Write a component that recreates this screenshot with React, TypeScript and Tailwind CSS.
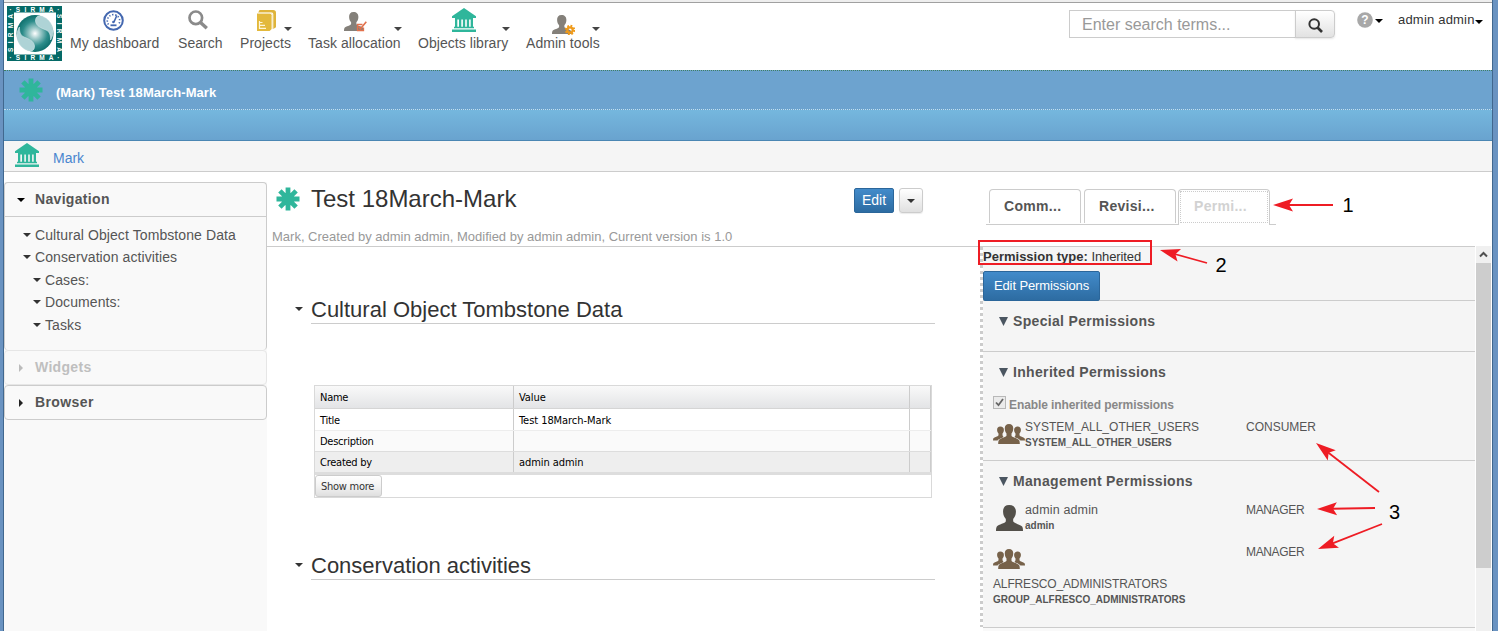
import React from "react";

type IconProps = { className?: string };

function Caret({ className = "", color = "#222" }: { className?: string; color?: string }) {
  return (
    <svg className={"shrink-0 " + className} width="8" height="4" viewBox="0 0 8 4">
      <path d="M0 0h8L4 4z" fill={color} />
    </svg>
  );
}

function CaretRight({ className = "", color = "#222" }: { className?: string; color?: string }) {
  return (
    <svg className={"shrink-0 " + className} width="4" height="8" viewBox="0 0 4 8">
      <path d="M0 0v8L4 4z" fill={color} />
    </svg>
  );
}

function Logo() {
  const style = {
    fontFamily: '"Liberation Sans", sans-serif',
    fontSize: "6.5px",
    fontWeight: 700,
    fill: "#fff",
  } as const;
  const swirl = "M31 10C39 9.500 46 17 46 25c0 4-1 7-2.500 9C43.500 29 43 26 39 24 34 22 29 20 28.500 15c-.1-2 .6-4 2.500-5z";
  return (
    <svg className="ml-[3px] mt-[3px] shrink-0" width="55" height="55" viewBox="0 0 55 55">
      <defs>
        <radialGradient id="globe" cx="0.5" cy="0.5" r="0.52">
          <stop offset="0" stopColor="#ffffff" />
          <stop offset="0.25" stopColor="#a9d0d0" />
          <stop offset="0.65" stopColor="#2c8c8a" />
          <stop offset="1" stopColor="#0a6b69" />
        </radialGradient>
      </defs>
      <rect width="55" height="55" fill="#056a67" />
      <rect x="7" y="6.5" width="42" height="42" fill="#fff" />
      <circle cx="28" cy="27.5" r="18.5" fill="url(#globe)" />
      <path d={swirl} fill="#aed3d6" stroke="#d3e8e9" strokeWidth="0.6" />
      <path d={swirl} transform="rotate(180 28 27.500)" fill="#aed3d6" stroke="#d3e8e9" strokeWidth="0.6" />
      <text x="2.500" y="5.600" textLength="50" style={style}>· S I R M A ·</text>
      <text x="2.500" y="54" textLength="50" style={style}>· S I R M A ·</text>
      <text x="-46" y="5.800" textLength="38" transform="rotate(-90)" style={style}>S I R M A</text>
      <text x="8" y="-49.800" textLength="38" transform="rotate(90)" style={style}>S I R M A</text>
    </svg>
  );
}

function DashboardIcon({ className = "" }: IconProps) {
  return (
    <svg className={"shrink-0 " + className} width="21" height="21" viewBox="0 0 21 21" fill="none" stroke="#4468b0">
      <circle cx="10.5" cy="10.5" r="9.3" strokeWidth="2" />
      <path d="M5.500 14.500A6.200 6.200 0 1 1 15.500 14.500" strokeWidth="1.600" strokeDasharray="1.300 1.700" />
      <path d="M13.8 5.5 11 12" strokeWidth="1.6" />
      <path d="M7.500 15.300h6" strokeWidth="1.800" />
      <circle cx="10.4" cy="12" r="1.3" fill="#4468b0" stroke="none" />
    </svg>
  );
}

function SearchIcon({ className = "" }: IconProps) {
  return (
    <svg className={"shrink-0 " + className} width="20" height="20" viewBox="0 0 20 20" fill="none" stroke="#8a8a8a">
      <circle cx="7.8" cy="7.8" r="6.3" strokeWidth="2.7" />
      <path d="m12.5 12.5 6.3 5.8" strokeWidth="3.4" />
    </svg>
  );
}

function ProjectsIcon({ className = "" }: IconProps) {
  return (
    <svg className={"shrink-0 " + className} width="19" height="21" viewBox="0 0 19 21">
      <path d="M2.5 0h13.7Q19 0 19 2.8v14.4L16.3 19V4Q16 2.6 14.5 2.6H1.2z" fill="#dfb43a" />
      <path d="M0 3.4h12.7q1.9 0 1.9 1.9V19l-2 2H0z" fill="#e3b93c" />
      <path d="M1 3h12.500q2 0 2 2v14" fill="none" stroke="#f7eac0" strokeWidth="0.8" />
      <path d="M2.500 11v8M2 12.500h3.500M2 15.300h6M2 18.300h7" stroke="#fff6d8" strokeWidth="1.200" />
    </svg>
  );
}

function PersonShape({ fill }: { fill: string }) {
  return (
    <path
      d="M9.5 0C6.4 0 5 2 5.1 5c.1 2.6.9 4 2 5.300v1.600C6.800 13.400 1.800 14.200.6 15.800.1 16.600 0 18 0 19h19.500c0-1-.1-2.400-.6-3.200-1.200-1.600-6.200-2.400-6.500-3.900v-1.600c1.100-1.300 1.900-2.700 2-5.300C14.500 2 12.600 0 9.500 0z"
      fill={fill}
    />
  );
}

function TaskIcon({ className = "" }: IconProps) {
  return (
    <svg className={"shrink-0 " + className} width="23" height="20" viewBox="0 0 23 20">
      <PersonShape fill="#84807a" />
      <path d="M18.500 12.500h-5v6h6v-3" fill="none" stroke="#e2714c" strokeWidth="1.300" />
      <path d="m14.500 14.500 2 2.200 5.800-7" fill="none" stroke="#e2714c" strokeWidth="1.600" />
    </svg>
  );
}

function AdminIcon({ className = "" }: IconProps) {
  return (
    <svg className={"shrink-0 " + className} width="23" height="20" viewBox="0 0 23 20">
      <PersonShape fill="#84807a" />
      <circle cx="18" cy="15" r="4.200" fill="none" stroke="#ef9a1a" strokeWidth="2" strokeDasharray="1.800 1.499" />
      <circle cx="18" cy="15" r="2.700" fill="none" stroke="#ef9a1a" strokeWidth="2.200" />
    </svg>
  );
}

function MuseumIcon({ className = "" }: IconProps) {
  return (
    <svg className={"shrink-0 " + className} width="24" height="24" viewBox="0 0 24 24" fill="#2fb69b">
      <path d="M12 0 24 8.300V10H0V8.300z" />
      <path d="M3 10h18v1.500H3z" />
      <path d="M3 11h2.300v8H3zM7 11h2.300v8H7zM10.900 11h2.300v8h-2.300zM14.800 11h2.300v8h-2.300zM18.700 11H21v8h-2.300z" />
      <path d="M2 18.700h20v1.500H2zM0 21.500h24V24H0z" />
    </svg>
  );
}

function Asterisk({ className = "" }: IconProps) {
  return (
    <svg className={"shrink-0 " + className} width="24" height="24" viewBox="0 0 24 24">
      <path d="M12 .5v23M.5 12h23M3.900 3.900l16.200 16.200M20.100 3.900 3.900 20.100" stroke="#2fb69b" strokeWidth="4.800" />
      <circle cx="12" cy="12" r="6.600" fill="#2fb69b" />
    </svg>
  );
}

function GroupIcon({ className = "" }: IconProps) {
  return (
    <svg className={"shrink-0 " + className} width="32" height="20" viewBox="0 0 32 20" fill="#77624a">
      <path d="M7.300 2.600C5.200 2.600 4 4 4.100 6c.1 1.700.6 2.700 1.400 3.500v1.700C5 12.600.8 13.100.2 14.600L0 16.500h4.500c1-1.300 3-2 5.300-3l.6-.7-.9-1.600V9.500c.8-.8 1.300-1.800 1.400-3.500.1-2-1.300-3.400-3.600-3.400z" />
      <path d="M24.700 2.600c2.100 0 3.300 1.400 3.200 3.400-.1 1.700-.6 2.700-1.400 3.500v1.700c.5 1.400 4.700 1.900 5.300 3.400l.2 1.900h-4.500c-1-1.300-3-2-5.300-3l-.6-.7.9-1.600V9.500c-.8-.8-1.300-1.800-1.400-3.500-.1-2 1.300-3.400 3.600-3.400z" />
      <path d="M16 0c-3 0-4.400 1.900-4.200 4.700.1 2.200.7 3.600 1.700 4.800v2.300c-.5 1.600-6.600 2.500-7.700 4.400-.5.900-.6 2.600-.6 3.800h21.600c0-1.200-.1-2.900-.6-3.800-1.100-1.900-7.200-2.800-7.700-4.400V9.500c1-1.200 1.600-2.600 1.700-4.800C20.400 1.900 19 0 16 0z" />
    </svg>
  );
}

function NavItem(props: {
  label: string;
  box: string;
  icon: React.ReactNode;
  caret?: boolean;
}) {
  return (
    <div className={"flex shrink-0 flex-col " + props.box}>
      <div className="flex h-[32px] items-start">
        {props.icon}
        {props.caret && <Caret className="-mr-px ml-auto mt-[24px]" color="#444" />}
      </div>
      <div className="whitespace-nowrap text-[14px] leading-[17px] tracking-[0.050px] text-[#555]">{props.label}</div>
    </div>
  );
}

function Header() {
  return (
    <header className="flex h-[67px] shrink-0 items-start bg-white">
      <Logo />
      <div className="ml-[8px] flex">
        <NavItem label="My dashboard" box="w-[108px]" icon={<DashboardIcon className="ml-[33px] mt-[7px]" />} />
        <NavItem label="Search" box="w-[62px]" icon={<SearchIcon className="ml-[10px] mt-[7px]" />} />
        <NavItem label="Projects" box="mr-[17px] w-[51px]" caret icon={<ProjectsIcon className="ml-[17px] mt-[7px]" />} />
        <NavItem label="Task allocation" box="mr-[17px] w-[93px]" caret icon={<TaskIcon className="ml-[36px] mt-[9px]" />} />
        <NavItem label="Objects library" box="mr-[17px] w-[91px]" caret icon={<MuseumIcon className="ml-[34px] mt-[5px]" />} />
        <NavItem label="Admin tools" box="w-[73px]" caret icon={<AdminIcon className="ml-[26px] mt-[12px]" />} />
      </div>
      <div className="ml-auto flex items-start">
        <div className="mt-[7px] flex h-[28px]">
          <div className="w-[227px] border border-[#ccc] bg-white pl-[12px] text-[16px] leading-[27px] text-[#999]">
            Enter search terms...
          </div>
          <div className="-ml-px flex w-[40px] items-center justify-center rounded-r border border-[#ccc] bg-linear-to-b from-white to-[#e2e2e2] shadow-[0_1px_2px_rgba(0,0,0,0.1)]">
            <svg width="15" height="15" viewBox="0 0 15 15" fill="none" stroke="#333" className="mt-[2px]">
              <circle cx="6.200" cy="6" r="4.800" strokeWidth="2" />
              <path d="m9.500 9.500 4.500 4.500" strokeWidth="2.600" />
            </svg>
          </div>
        </div>
        <svg className="ml-[22px] mt-[9px]" width="16" height="16" viewBox="0 0 16 16">
          <circle cx="8" cy="8" r="7.800" fill="#a8a8a8" />
          <text x="8" y="12.200" textAnchor="middle" fontFamily="Liberation Sans, sans-serif" fontSize="12" fontWeight="700" fill="#fff">?</text>
        </svg>
        <Caret className="ml-[2px] mt-[16px]" color="#000" />
        <div className="ml-[15px] mt-[9px] w-[77px] whitespace-nowrap text-[13px] leading-[16px] tracking-[0.2px] text-[#333]">admin admin</div>
        <Caret className="mr-[9px] mt-[17px]" color="#000" />
      </div>
    </header>
  );
}

function Sidebar() {
  const rows = [
    { label: "Cultural Object Tombstone Data", indent: "pl-[18px]", h: "h-[22px]" },
    { label: "Conservation activities", indent: "pl-[18px]", h: "h-[22px]" },
    { label: "Cases:", indent: "pl-[28px]", h: "h-[23px]" },
    { label: "Documents:", indent: "pl-[28px]", h: "h-[22px]" },
    { label: "Tasks", indent: "pl-[28px]", h: "h-[23px]" },
  ];
  return (
    <aside className="flex w-[263px] shrink-0 flex-col">
      <div className="h-[10px] shrink-0 bg-white" />
      <div className="flex flex-1 flex-col bg-[#f9f9f9]">
        <section className="h-[168px] shrink-0 rounded border border-b-0 border-[#ccc]">
          <div className="flex h-[34px] items-center border-b border-[#ccc] pl-[12px]">
            <Caret color="#000" />
            <span className="ml-[10px] text-[14px] font-bold tracking-[0.320px] text-[#555]">Navigation</span>
          </div>
          <div className="pt-[7px]">
            {rows.map((r) => (
              <div key={r.label} className={"flex items-center whitespace-nowrap text-[14px] leading-[22px] tracking-[0.090px] text-[#555] " + r.indent + " " + r.h}>
                <Caret color="#333" />
                <span className="ml-[4px]">{r.label}</span>
              </div>
            ))}
          </div>
        </section>
        <section className="flex h-[35px] shrink-0 items-center rounded border border-[#e6e6e6] pl-[14px]">
          <CaretRight color="#bbb" />
          <span className="ml-[12px] text-[14px] font-bold tracking-[0.320px] text-[#bfbfbf]">Widgets</span>
        </section>
        <section className="flex h-[35px] shrink-0 items-center rounded border border-[#ccc] pl-[14px]">
          <CaretRight />
          <span className="ml-[12px] text-[14px] font-bold tracking-[0.400px] text-[#555]">Browser</span>
        </section>
      </div>
    </aside>
  );
}

function SectionTitle({ children, className }: { children: string; className: string }) {
  return (
    <div className={"flex items-start " + className}>
      <Caret className="mr-[8px] mt-[13px]" color="#333" />
      <h2 className="h-[30px] w-[624px] border-b border-[#ccc] text-[22px] leading-[31px] text-[#333]">{children}</h2>
    </div>
  );
}

function Row({ name, value, className }: { name: string; value: string; className: string }) {
  return (
    <div className={"flex shrink-0 " + className}>
      <div className="w-[199px] border-r border-[#ccc] pl-[5px]">{name}</div>
      <div className="w-[396px] border-r border-[#ccc] pl-[5px] tracking-[-0.060px]">{value}</div>
      <div className="flex-1 border-r border-[#ccc]" />
    </div>
  );
}

function PropertyTable() {
  return (
    <div className="ml-[47px] mt-[61px] flex h-[113px] w-[618px] flex-col border border-[#d9d9d9] font-['DejaVu_Sans_Condensed','DejaVu_Sans',sans-serif] text-[11px] tracking-[-0.250px] text-black">
      <Row name="Name" value="Value" className="h-[23px] border-b border-[#d5d5d5] bg-linear-to-b from-[#f9f9f9] to-[#e3e4e6] leading-[23px]" />
      <Row name="Title" value="Test 18March-Mark" className="h-[22px] border-b border-[#ededed] bg-white leading-[23px]" />
      <Row name="Description" value="" className="h-[21px] border-b border-[#ddd] bg-[#fafafa] leading-[21px]" />
      <Row name="Created by" value="admin admin" className="h-[20px] bg-[#eee] leading-[21px]" />
      <div className="h-[3px] shrink-0 bg-[#ddd]" />
      <div className="h-[22px]">
        <div className="h-[22px] w-[67px] rounded-[3px] border border-[#ccc] bg-linear-to-b from-white from-0% via-[#f3f3f3] via-50% to-[#dfdfdf] to-100% pl-[5px] leading-[21px] text-[#333]">
          Show more
        </div>
      </div>
    </div>
  );
}

function Center() {
  return (
    <main className="w-[713px] shrink-0">
      <div className="flex h-[75px] flex-col border-b border-[#ccc]">
        <div className="flex h-[54px] shrink-0 items-start">
          <Asterisk className="ml-[9px] mt-[15px]" />
          <h1 className="ml-[11px] mt-[12px] w-[543px] text-[24px] leading-[30px] text-[#333]">Test 18March-Mark</h1>
          <div className="mt-[16px] h-[25px] w-[40px] shrink-0 rounded-[2px] border border-[#2b669a] bg-linear-to-b from-[#428bca] to-[#2d6ca2] text-center text-[14px] leading-[23px] text-white">
            Edit
          </div>
          <div className="ml-[5px] mt-[16px] flex h-[25px] w-[24px] shrink-0 items-center justify-center rounded-[3px] border border-[#ccc] bg-linear-to-b from-white to-[#e0e0e0] shadow-[0_1px_1px_rgba(0,0,0,0.08)]">
            <Caret color="#333" className="mt-px" />
          </div>
        </div>
        <p className="ml-[5px] mt-px shrink-0 text-[13px] leading-[20px] text-[#999]">
          Mark, Created by admin admin, Modified by admin admin, Current version is 1.0
        </p>
      </div>
      <SectionTitle className="ml-[28px] mt-[47px]">Cultural Object Tombstone Data</SectionTitle>
      <PropertyTable />
      <SectionTitle className="ml-[28px] mt-[52px]">Conservation activities</SectionTitle>
    </main>
  );
}

function PanelHeading({ children, className }: { children: string; className: string }) {
  return (
    <div className={"flex items-center pl-[16px] " + className}>
      <svg width="9" height="9" viewBox="0 0 9 9">
        <path d="M0 0h9L4.500 9z" fill="#4b5661" />
      </svg>
      <h3 className="ml-[5px] whitespace-nowrap text-[14px] font-bold leading-[18px] tracking-[0.330px] text-[#555]">{children}</h3>
    </div>
  );
}

function Names({ name, id, size }: { name: string; id: string; size: string }) {
  return (
    <div className="whitespace-nowrap">
      <div className={"leading-[18px] " + size}>{name}</div>
      <div className="text-[10px] font-bold leading-[13px]">{id}</div>
    </div>
  );
}

function Permissions() {
  return (
    <div className="flex min-w-0 flex-1 border-t border-[#ccc]">
      <svg className="shrink-0" width="3" height="380" viewBox="0 0 3 380">
        <path d="M1.500 0v380" stroke="#ccc" strokeWidth="3" strokeDasharray="3 3" />
      </svg>
      <div className="flex flex-1 flex-col bg-[#f5f5f5] text-[#555]">
        <div className="h-[54px] shrink-0 border-b border-[#ccc]">
          <div className="h-[24px] whitespace-nowrap text-[13px] leading-[20px] text-[#333]">
            <b>Permission type:</b> <span className="tracking-[-0.100px]">Inherited</span>
          </div>
          <div className="h-[30px] w-[117px] rounded-[2px] border border-[#2b669a] bg-linear-to-b from-[#428bca] to-[#2d6ca2] text-center text-[13px] leading-[28px] tracking-[-0.100px] text-white">
            Edit Permissions
          </div>
        </div>
        <section className="h-[51px] shrink-0 border-b border-[#ccc]">
          <PanelHeading className="h-[40px]">Special Permissions</PanelHeading>
        </section>
        <section className="h-[109px] shrink-0 border-b border-[#ccc]">
          <PanelHeading className="h-[40px]">Inherited Permissions</PanelHeading>
          <div className="flex h-[26px] items-start pl-[10px]">
            <svg className="mt-[4px] shrink-0" width="13" height="13" viewBox="0 0 13 13">
              <rect x="0.500" y="0.500" width="12" height="12" fill="#ebebeb" stroke="#b8b8b8" />
              <path d="m3 6.500 2.500 2.700L10 3" fill="none" stroke="#666" strokeWidth="1.800" />
            </svg>
            <span className="ml-[3px] mt-[5px] text-[12px] font-bold leading-[16px] tracking-[-0.090px] text-[#888]">Enable inherited permissions</span>
          </div>
          <div className="flex items-start pl-[10px]">
            <GroupIcon className="mt-[6px]" />
            <div className="w-[221px]">
              <Names size="text-[12px]" name="SYSTEM_ALL_OTHER_USERS" id="SYSTEM_ALL_OTHER_USERS" />
            </div>
            <div className="text-[12px] leading-[18px]">CONSUMER</div>
          </div>
        </section>
        <section className="h-[167px] shrink-0 border-b border-[#ccc]">
          <PanelHeading className="h-[40px]">Management Permissions</PanelHeading>
          <div className="flex h-[42px] items-start pl-[13px]">
            <svg className="mt-[4px] shrink-0" width="27" height="26" viewBox="0 0 19.500 19" preserveAspectRatio="none">
              <PersonShape fill="#53504a" />
            </svg>
            <div className="ml-[2px] w-[221px]">
              <Names size="text-[12.500px] tracking-[0.150px]" name="admin admin" id="admin" />
            </div>
            <div className="text-[12px] leading-[18px] tracking-[-0.350px]">MANAGER</div>
          </div>
          <div className="flex items-start pl-[10px]">
            <GroupIcon className="mt-[6px]" />
            <div className="ml-[221px] text-[12px] leading-[18px] tracking-[-0.350px]">MANAGER</div>
          </div>
          <div className="pl-[10px] pt-[6px]">
            <Names size="text-[12px] tracking-[-0.150px]" name="ALFRESCO_ADMINISTRATORS" id="GROUP_ALFRESCO_ADMINISTRATORS" />
          </div>
        </section>
        <div className="flex-1 bg-[#f9f9f9]" />
      </div>
    </div>
  );
}

function Side() {
  const tab = "h-[34px] rounded-t-[4px] border border-b-0 border-[#ccc] bg-white pl-[14px] text-[14px] font-bold leading-[33px] tracking-[0.300px]";
  return (
    <div className="flex flex-1 flex-col">
      <div className="flex h-[74px] shrink-0 items-start pl-[6px] pt-[17px]">
        <div className="flex h-[36px] w-[290px] border-b border-[#ccc] pl-[3px] text-[#555]">
          <div className={tab + " w-[92px]"}>Comm...</div>
          <div className={tab + " ml-[3px] w-[92px]"}>Revisi...</div>
          <div className="ml-[2px] h-[36px] w-[92px] rounded-t-[4px] border border-b-0 border-[#ccc] bg-white p-px">
            <div className="h-[32px] border border-dotted border-[#ccc] pl-[13px] text-[14px] font-bold leading-[29px] tracking-[0.300px] text-[#d2d2d2]">
              Permi...
            </div>
          </div>
        </div>
      </div>
      <div className="flex flex-1">
        <Permissions />
        <div className="ml-px mr-px flex w-[15px] flex-col bg-[#f0f0f0]">
          <div className="flex h-[17px] items-center justify-center">
            <svg width="9" height="7" viewBox="0 0 9 7">
              <path d="m1 5.500 3.500-3.500L8 5.500" fill="none" stroke="#505050" strokeWidth="2" />
            </svg>
          </div>
          <div className="h-[305px] bg-[#cdcdcd]" />
        </div>
      </div>
    </div>
  );
}

function Arrow({ x1, y1, x2, y2 }: { x1: number; y1: number; x2: number; y2: number }) {
  const angle = (Math.atan2(y2 - y1, x2 - x1) * 180) / Math.PI;
  const length = Math.hypot(x2 - x1, y2 - y1);
  return (
    <g transform={`translate(${x2} ${y2}) rotate(${angle})`} fill="#ee1c24">
      <path d="M0 0-20-6.500-16 0-20 6.500z" />
      <path d={`M-15 0H${-length}`} stroke="#ee1c24" strokeWidth="1.800" />
    </g>
  );
}

function Annotations() {
  return (
    <svg className="pointer-events-none absolute left-0 top-0" width="1498" height="631" viewBox="0 0 1498 631">
      <rect x="979" y="241" width="172" height="23" fill="none" stroke="#ee1c24" strokeWidth="2" />
      <Arrow x1={1333} y1={205} x2={1273} y2={205} />
      <Arrow x1={1207} y1={263} x2={1160} y2={250} />
      <Arrow x1={1379} y1={492} x2={1316} y2={443} />
      <Arrow x1={1375} y1={508} x2={1317} y2={509} />
      <Arrow x1={1382} y1={524} x2={1318} y2={549} />
      <g fontFamily="Liberation Sans, sans-serif" fontSize="20" fill="#000">
        <text x="1342.500" y="212">1</text>
        <text x="1215.500" y="272">2</text>
        <text x="1389" y="519">3</text>
      </g>
    </svg>
  );
}

export default function App() {
  return (
    <div className="relative flex h-[631px] w-[1498px] overflow-hidden bg-white font-['Liberation_Sans',Arial,sans-serif]">
      <div className="w-[4px] shrink-0 border-r border-[#41688f] bg-[#6a93c1]" />
      <div className="flex w-[1488px] shrink-0 flex-col">
        <div className="h-[3px] shrink-0 border-b border-[#a0a0a0] bg-[#eee]" />
        <Header />
        <div className="h-[39px] shrink-0 border-t border-dotted border-[#3f7f62] bg-[#6da3cf]">
          <div className="flex h-[38px] items-center">
            <Asterisk className="ml-[15px]" />
            <span className="ml-[13px] mt-[5px] text-[13px] font-bold tracking-[0.030px] text-white">(Mark) Test 18March-Mark</span>
          </div>
        </div>
        <div className="h-[32px] shrink-0 border-b border-t border-b-[#4a86b3] border-t-[#c4dff0] bg-linear-to-b from-[#75b7de] to-[#69a3cf] [border-top-style:dotted]" />
        <div className="flex h-[31px] shrink-0 items-start border-b border-[#ccc] bg-[#f5f5f5]">
          <MuseumIcon className="ml-[11px] mt-[2px]" />
          <span className="ml-[14px] mt-[8px] text-[14px] leading-[18px] text-[#4a86cf]">Mark</span>
        </div>
        <div className="flex flex-1 overflow-hidden">
          <Sidebar />
          <Center />
          <Side />
        </div>
      </div>
      <div className="w-[6px] shrink-0 border-l border-[#41688f] bg-[#6a93c1]" />
      <Annotations />
    </div>
  );
}
